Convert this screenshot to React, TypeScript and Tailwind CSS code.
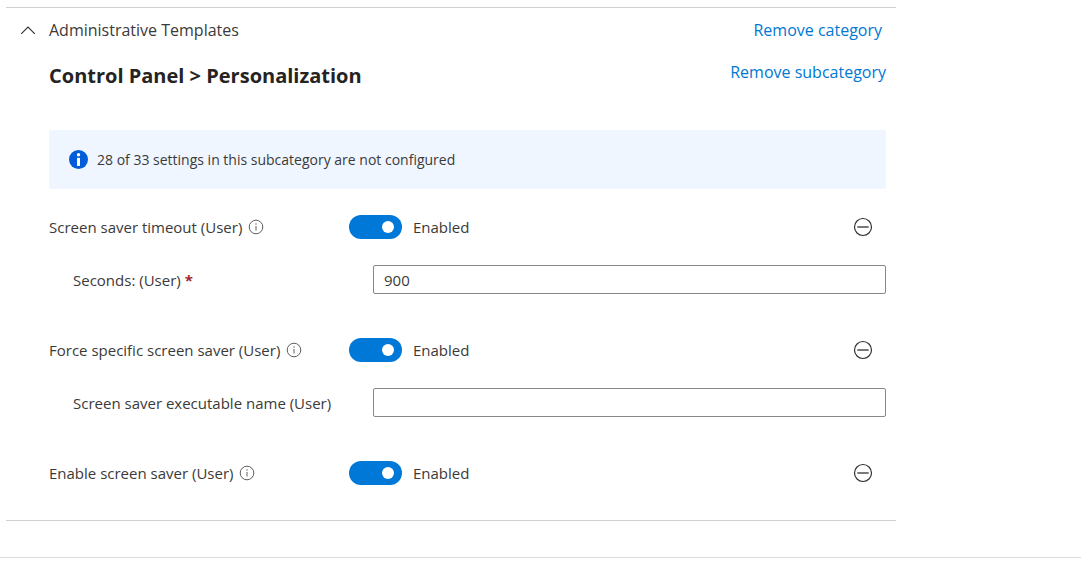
import { useState } from 'react';

type Setting = {
  id: string;
  label: string;
  field?: { label: string; value: string; required?: boolean };
};

const settings: Setting[] = [
  {
    id: 'timeout',
    label: 'Screen saver timeout (User)',
    field: { label: 'Seconds: (User)', value: '900', required: true },
  },
  {
    id: 'force',
    label: 'Force specific screen saver (User)',
    field: { label: 'Screen saver executable name (User)', value: '' },
  },
  { id: 'enable', label: 'Enable screen saver (User)' },
];

function InfoOutlineIcon() {
  return (
    <svg className="size-4" viewBox="0 0 16 16" fill="none" stroke="#605e5c" aria-hidden="true">
      <circle cx="8" cy="8" r="6.8" strokeWidth="1" />
      <path d="M8 7v4.5" strokeWidth="1" />
      <circle cx="8" cy="5" r="0.7" fill="#605e5c" stroke="none" />
    </svg>
  );
}

function InfoFilledIcon() {
  return (
    <svg className="size-5 shrink-0" viewBox="0 0 20 20" aria-hidden="true">
      <circle cx="9.5" cy="9.5" r="9.5" fill="#015cda" />
      <circle cx="9.5" cy="4.8" r="1.7" fill="#fff" />
      <path d="M8 7.8h3v8.2H8z" fill="#fff" />
    </svg>
  );
}

function RemoveIcon() {
  return (
    <svg className="size-5" viewBox="0 0 20 20" fill="none" stroke="#323130" aria-hidden="true">
      <circle cx="10" cy="10" r="8.5" strokeWidth="1.2" />
      <path d="M4.3 10h11.4" strokeWidth="1.3" />
    </svg>
  );
}

function SettingRow({ setting }: { setting: Setting }) {
  const [enabled, setEnabled] = useState(true);
  const [value, setValue] = useState(setting.field?.value ?? '');
  const { id, label, field } = setting;

  return (
    <div className="flex flex-col gap-[26px]">
      <div className="flex h-6 items-center">
        <div className="flex w-[300px] shrink-0 items-center gap-1.5">
          <span id={`${id}-label`}>{label}</span>
          <button type="button" aria-label={`About ${label}`}>
            <InfoOutlineIcon />
          </button>
        </div>
        <button
          type="button"
          role="switch"
          aria-checked={enabled}
          aria-labelledby={`${id}-label`}
          onClick={() => setEnabled(!enabled)}
          className={
            enabled
              ? 'flex h-6 w-[53px] items-center justify-end rounded-full bg-[#0078d7] px-2'
              : 'flex h-6 w-[53px] items-center justify-start rounded-full bg-[#8a8886] px-2'
          }
        >
          <span className="size-3 rounded-full bg-white" />
        </button>
        <span className="ml-[11px]">{enabled ? 'Enabled' : 'Disabled'}</span>
        <button type="button" aria-label={`Remove ${label}`} className="mr-[13px] ml-auto">
          <RemoveIcon />
        </button>
      </div>
      {field && (
        <div className="flex items-center pl-6">
          <label htmlFor={`${id}-field`} className="w-[300px] shrink-0 leading-6">
            {field.label}
            {field.required && <span className="ml-1 font-bold text-[#a4262c]">*</span>}
          </label>
          <input
            id={`${id}-field`}
            type="text"
            required={field.required}
            value={value}
            onChange={(e) => setValue(e.target.value)}
            className="h-[29px] min-w-0 flex-1 rounded-xs border border-[#8a8886] bg-white px-2.5"
          />
        </div>
      )}
    </div>
  );
}

export default function App() {
  const [open, setOpen] = useState(true);

  return (
    <main className="border-b border-[#dcdcdc] bg-white pt-[7px] pb-9 pl-1.5 font-['Open_Sans','Noto_Sans',sans-serif] text-[15px] text-[#3b3a39]">
      <section className="max-w-[890px] border-y border-[#d2d0ce]">
        <div className="flex h-11 items-center justify-between pr-3.5 text-base">
          <button
            type="button"
            aria-expanded={open}
            onClick={() => setOpen(!open)}
            className="flex items-center gap-3 pl-3.5"
          >
            <svg
              className="h-4 w-[17px]"
              viewBox="0 0 17 16"
              fill="none"
              stroke="#323130"
              strokeWidth="1.1"
              aria-hidden="true"
            >
              <path d="M1.2 11.8 8 5l6.8 6.8" />
            </svg>
            Administrative Templates
          </button>
          <a href="#category" className="text-[#0078d4]">
            Remove category
          </a>
        </div>
        {open && (
          <div className="pr-2.5 pb-[35px] pl-[43px]">
            <div className="flex h-12 items-start justify-between">
              <h2 className="text-xl leading-12 font-bold text-[#252423]">
                Control Panel &gt; Personalization
              </h2>
              <a href="#subcategory" className="text-base leading-10 text-[#0078d4]">
                Remove subcategory
              </a>
            </div>
            <div className="mt-[30px] flex h-[59px] items-center gap-2 rounded-xs bg-[#eff6ff] px-5 text-sm">
              <InfoFilledIcon />
              28 of 33 settings in this subcategory are not configured
            </div>
            <div className="mt-[26px] flex flex-col gap-11">
              {settings.map((setting) => (
                <SettingRow key={setting.id} setting={setting} />
              ))}
            </div>
          </div>
        )}
      </section>
    </main>
  );
}
